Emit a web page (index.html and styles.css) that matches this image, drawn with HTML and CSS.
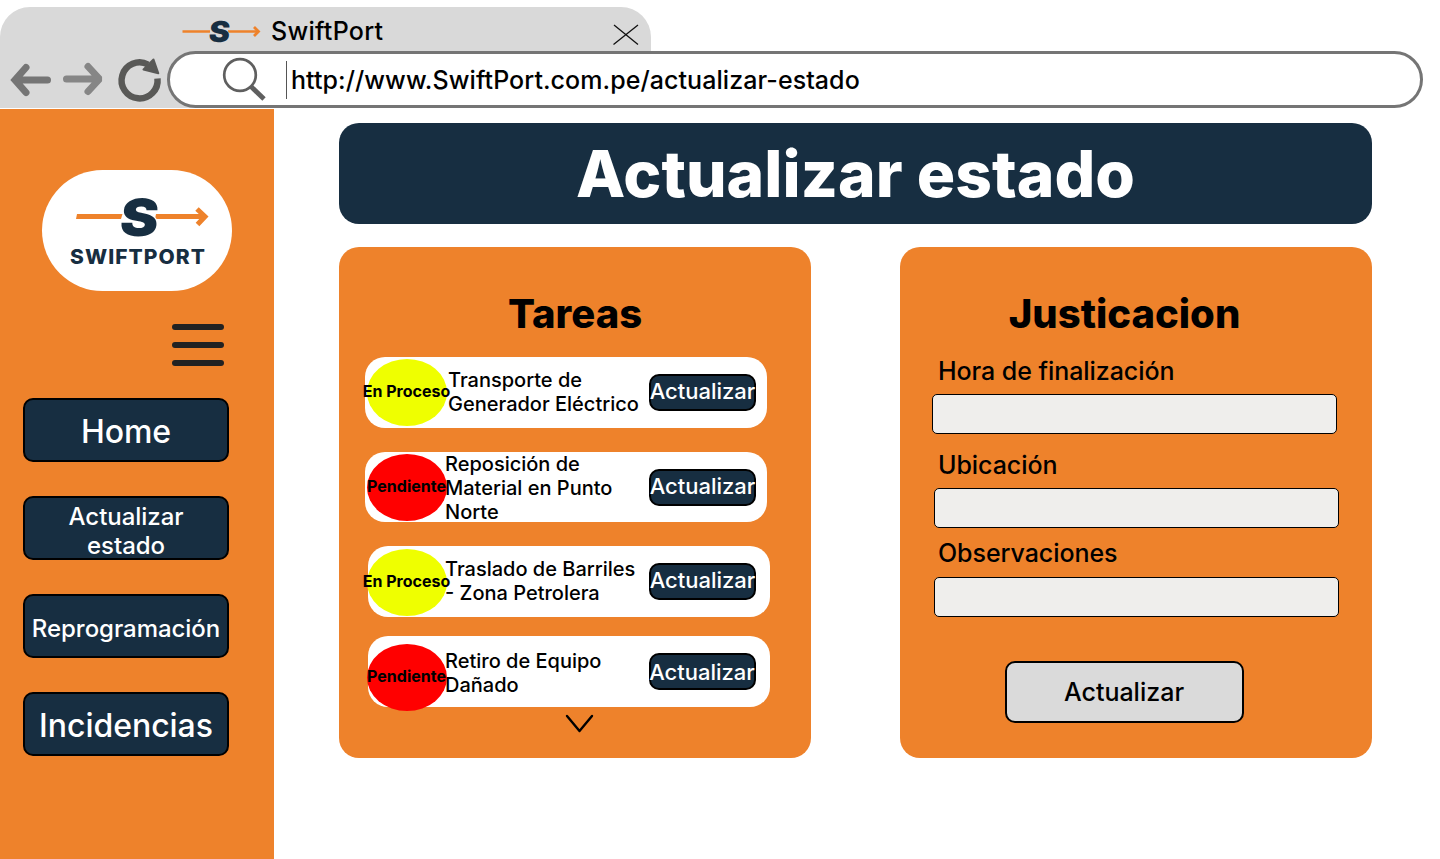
FILE: index.html
```html
<!DOCTYPE html>
<html lang="es">
<head>
<meta charset="utf-8">
<title>SwiftPort</title>
<link rel="stylesheet" href="styles.css">
</head>
<body>
<header class="browser">
  <div class="tab">
    <svg class="tab-logo" width="80" height="30" viewBox="0 0 80 30">
      <path d="M.500 15.500H28M46 15.500H75" fill="none" stroke="#ee822b" stroke-width="2.600"/>
      <path d="M72 11L76.500 15.500L72 20" fill="none" stroke="#ee822b" stroke-width="2.800"/>
      <text class="logo-letter small" transform="translate(26 26) skewX(-6) scale(1.090 1)" font-size="29">S</text>
    </svg>
    <span class="tab-title">SwiftPort</span>
    <svg class="tab-close" width="26" height="22" viewBox="0 0 26 22"><path d="M1 1L25 20.500M25 1L.500 20.500" fill="none" stroke="#111" stroke-width="1.300"/></svg>
  </div>
  <div class="toolbar">
    <svg class="nav-icons" width="165" height="56" viewBox="0 0 165 56">
      <path d="M47.500 29H17M26 16.500L15 29L26 41.500" fill="none" stroke="#757575" stroke-width="7" stroke-linecap="round" stroke-linejoin="miter"/>
      <path d="M66.500 28H98M88 15.500L99.500 28L88 40.500" fill="none" stroke="#868686" stroke-width="7" stroke-linecap="round" stroke-linejoin="bevel"/>
      <path d="M157.500 27.500A18 18 0 1 1 148 13.500" fill="none" stroke="#595957" stroke-width="6.500"/>
      <path d="M153.500 8.500L158.300 22.300L143.500 18.500L149 13Z" fill="#595957" stroke="#595957" stroke-width="2" stroke-linejoin="round"/>
    </svg>
    <div class="address">
      <svg width="44" height="44" viewBox="0 0 44 44"><circle cx="18" cy="17" r="15.800" fill="none" stroke="#5f5f5f" stroke-width="2.700"/><path d="M29 28.500L42 41" fill="none" stroke="#5f5f5f" stroke-width="4.800"/></svg>
      <span class="caret"></span>
      <span class="url">http://www.SwiftPort.com.pe/actualizar-estado</span>
    </div>
  </div>
</header>
<div class="page">
  <aside class="sidebar">
    <div class="brand">
      <svg width="190" height="121" viewBox="0 0 190 121">
        <path d="M35 44H80.500L79 49H34ZM114 44H160V49H113Z" fill="#ee822b"/>
        <path d="M155 39L163 46.500L155.500 54.500" fill="none" stroke="#ee822b" stroke-width="5"/>
        <path d="M155 44L162 46.500L155 49Z" fill="#ee822b"/>
        <text class="logo-letter" transform="translate(76.500 65.500) skewX(-6) scale(1.120 1)" font-size="51.500">S</text>
        <text class="brand-name" x="28" y="94" textLength="136" lengthAdjust="spacingAndGlyphs">SWIFTPORT</text>
      </svg>
    </div>
    <div class="menu"><span></span><span></span><span></span></div>
    <nav class="nav">
      <a class="nav-item large">Home</a>
      <a class="nav-item double">Actualizar<br>estado</a>
      <a class="nav-item single">Reprogramación</a>
      <a class="nav-item large last">Incidencias</a>
    </nav>
  </aside>
  <main class="main">
    <h1 class="title">Actualizar estado</h1>
    <div class="panels">
      <section class="panel">
        <h2>Tareas</h2>
        <div class="tasks">
          <div class="task first">
            <span class="badge process"><b>En Proceso</b></span>
            <p>Transporte de<br>Generador Eléctrico</p>
            <button class="update">Actualizar</button>
          </div>
          <div class="task second">
            <span class="badge pending"><b>Pendiente</b></span>
            <p>Reposición de<br>Material en Punto<br>Norte</p>
            <button class="update">Actualizar</button>
          </div>
          <div class="task third">
            <span class="badge process"><b>En Proceso</b></span>
            <p>Traslado de Barriles<br>- Zona Petrolera</p>
            <button class="update">Actualizar</button>
          </div>
          <div class="task fourth">
            <span class="badge pending"><b>Pendiente</b></span>
            <p>Retiro de Equipo<br>Dañado</p>
            <button class="update">Actualizar</button>
          </div>
        </div>
        <svg class="more" width="30" height="20" viewBox="0 0 30 20"><path d="M2 3L14.500 18L27 3" fill="none" stroke="#000" stroke-width="2.400" stroke-linecap="round" stroke-linejoin="round"/></svg>
      </section>
      <section class="panel form">
        <h2>Justicacion</h2>
        <label for="hora">Hora de finalización</label>
        <input id="hora" class="hour">
        <label for="ubicacion">Ubicación</label>
        <input id="ubicacion">
        <label class="notes" for="obs">Observaciones</label>
        <input id="obs">
        <button class="submit">Actualizar</button>
      </section>
    </div>
  </main>
</div>
</body>
</html>
```
FILE: styles.css
```css
* { box-sizing: border-box; }
body { margin: 0; width: 1440px; height: 859px; overflow: hidden; background: #fff; color: #000; font-family: Inter, sans-serif; }
h1, h2, p { margin: 0; }
button, input { font: inherit; padding: 0; margin: 0; }
svg { display: block; flex: none; overflow: visible; }

.browser { height: 109px; padding-top: 7px; }
.tab { display: flex; width: 651px; height: 101px; padding-left: 182px; background: #d9d9d9; border-radius: 30px 30px 0 0; align-items: flex-start; }
.tab-logo { margin-top: 9px; }
.tab-title { width: 342px; margin: 9px 0 0 9px; font-size: 25px; line-height: 30px; font-weight: 500; letter-spacing: 0.27px; white-space: nowrap; }
.tab-close { margin-top: 17px; }
.toolbar { position: relative; display: flex; width: 1423px; margin-top: -57px; }
.nav-icons { margin-right: 2px; }
.address { display: flex; width: 1256px; height: 57px; padding-left: 52px; background: #fff; border: 3px solid #757575; border-radius: 29px; }
.address svg { margin-top: 4px; }
.caret { width: 1px; height: 38px; margin: 7px 4px 0 20px; background: #555; }
.url { padding-top: 11px; font-size: 25px; line-height: 30px; font-weight: 500; letter-spacing: 0.065px; white-space: nowrap; }

.page { display: flex; height: 750px; }
.sidebar { width: 274px; background: #ee822b; }
.brand { width: 190px; height: 121px; margin: 61px 0 33px 42px; background: #fff; border-radius: 62px; }
.logo-letter { font-family: Inter, sans-serif; font-weight: 900; fill: #172e41; stroke: #fff; stroke-width: 2px; paint-order: stroke; }
.logo-letter.small { stroke: #d9d9d9; stroke-width: 1px; }
.brand-name { font-family: Inter, sans-serif; font-size: 20px; font-weight: 800; letter-spacing: 1px; fill: #172e41; }
.menu { display: grid; gap: 12px; width: 52px; margin-left: 172px; }
.menu span { height: 6px; border-radius: 3px; background: #222; }
.nav { display: grid; gap: 34px; width: 206px; margin: 32px 0 0 23px; }
.nav-item { height: 64px; border: 2px solid #000; border-radius: 10px; background: #172e41; color: #fff; text-align: center; font-size: 24px; line-height: 29px; font-weight: 500; letter-spacing: -0.04px; white-space: nowrap; }
.nav-item.large { padding-top: 12px; font-size: 32px; line-height: 39px; }
.nav-item.double { padding-top: 4px; }
.nav-item.single { padding-top: 18px; }

.main { width: 1033px; margin: 14px 0 0 65px; }
.title { height: 101px; border-radius: 20px; background: #172e41; color: #fff; text-align: center; font-size: 64px; line-height: 101px; font-weight: 800; letter-spacing: 0.06px; }
.panels { display: flex; justify-content: space-between; margin-top: 23px; }
.panel { width: 472px; height: 511px; padding-top: 43px; border-radius: 20px; background: #ee822b; }
.panel h2 { text-align: center; font-size: 40px; line-height: 48px; font-weight: 800; }
.tasks { padding: 19px 0 0 26px; }
.task { display: grid; grid-template-columns: 80px 202px 107px; align-items: start; width: 402px; height: 71px; padding-left: 2px; border-radius: 20px; background: #fff; }
.task.second { height: 70px; margin: 24px 0; }
.task.third, .task.fourth { margin-left: 3px; padding-left: 0; grid-template-columns: 79px 202px 107px; }
.task.fourth { margin-top: 19px; }
.badge { display: flex; justify-content: center; width: 80px; height: 67px; margin-top: 2px; padding: 22px 1px 0 0; border-radius: 50%; font-size: 16px; line-height: 20px; white-space: nowrap; }
.badge b { flex: none; }
.third .badge { margin: 3px 0 0 -1px; }
.fourth .badge { margin: 8px 0 0 -1px; }
.process { background: #efff00; }
.pending { background: #f00; }
.task p { margin: 11px 0 0 -2px; font-size: 20px; line-height: 24px; font-weight: 500; white-space: nowrap; }
.task.first p { margin-left: 1px; }
.task.second p { margin-top: 0; }
.task.fourth p { margin-top: 13px; }
.update { display: flex; justify-content: center; width: 107px; height: 37px; margin-top: 17px; padding-top: 2px; border: 2px solid #000; border-radius: 10px; background: #172e41; color: #fff; font-size: 22px; line-height: 27px; font-weight: 500; white-space: nowrap; }
.fourth .update { padding: 4px 1px 0 0; }
.more { margin: 6px 0 0 226px; }

.form h2 { padding-right: 23px; }
.form label { display: block; margin: 18px 0 8px 38px; font-size: 25px; line-height: 30px; font-weight: 500; letter-spacing: -0.06px; }
.form input { display: block; width: 405px; height: 40px; margin-left: 34px; border: 1px solid #000; border-radius: 5px; background: #efeeec; }
.form .hour { margin-left: 32px; }
.form label[for="ubicacion"] { margin-top: 16px; }
.form label.notes { margin: 10px 0 9px 38px; }
.submit { display: block; width: 239px; height: 62px; margin: 44px 0 0 105px; padding-right: 1px; border: 2px solid #000; border-radius: 10px; background: #dadada; color: #000; font-size: 25px; font-weight: 500; line-height: 30px; }
```
